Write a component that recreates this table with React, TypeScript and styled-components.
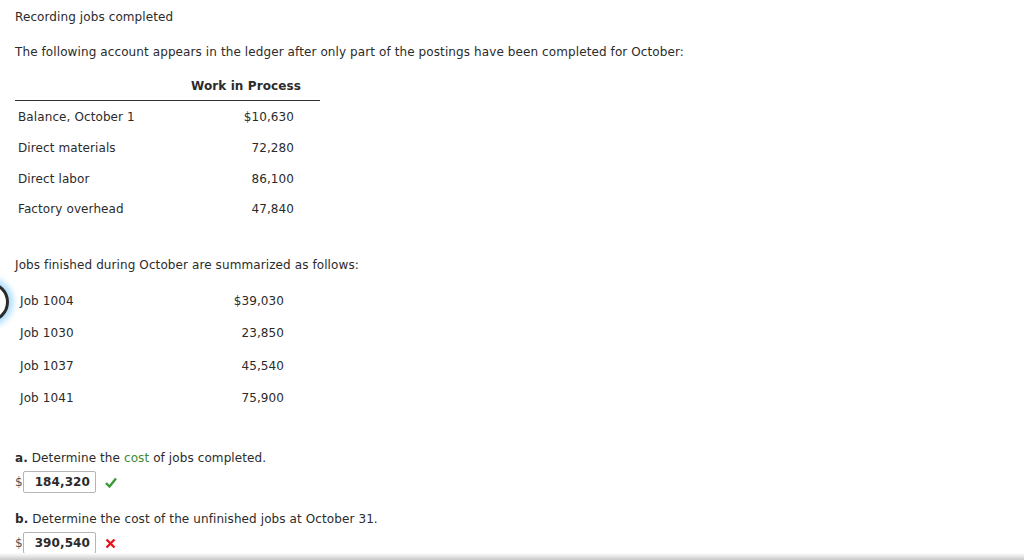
import styled, { createGlobalStyle } from 'styled-components';

const GlobalStyle = createGlobalStyle`
  html, body {
    margin: 0;
    padding: 0;
    background: #ffffff;
  }
  body {
    font-family: 'DejaVu Sans', Verdana, sans-serif;
    font-size: 12px;
    letter-spacing: 0.1px;
    color: #2b2b2b;
  }
`;

const Page = styled.div`
  position: relative;
  width: 1024px;
  height: 560px;
  overflow: hidden;
  padding: 9px 15px 0 15px;
  box-sizing: border-box;
`;

const Title = styled.div`
  line-height: 16px;
`;

const Para = styled.p<{ $top: number }>`
  margin: ${(p) => p.$top}px 0 0 0;
  line-height: 16px;
`;

const Ledger = styled.div`
  width: 305px;
  margin-top: 18px;
`;

const LedgerHead = styled.div`
  display: flex;
  justify-content: flex-end;
  padding: 0 19px 6px 0;
  border-bottom: 1px solid #333333;
  font-weight: bold;
  line-height: 16px;
`;

const LedgerBody = styled.div`
  padding-top: 1px;
`;

const Row = styled.div<{ $h: number; $pad: number; $amtRight: number; $amtW: number }>`
  display: grid;
  grid-template-columns: 1fr ${(p) => p.$amtW}px;
  height: ${(p) => p.$h}px;
  align-items: center;
  padding-left: ${(p) => p.$pad}px;
  padding-right: ${(p) => p.$amtRight}px;
`;

const Amount = styled.span`
  text-align: right;
`;

const Jobs = styled.div`
  width: 305px;
  margin-top: 12px;
`;

const Question = styled.div<{ $top: number }>`
  margin-top: ${(p) => p.$top}px;
  line-height: 16px;
`;

const Letter = styled.b`
  font-weight: bold;
`;

const Term = styled.span`
  color: #3d8b37;
`;

const AnswerRow = styled.div`
  display: flex;
  align-items: center;
  margin-top: 5px;
  height: 22px;
`;

const Dollar = styled.span`
  width: 8px;
  color: #555555;
`;

const AnswerBox = styled.div`
  width: 73px;
  height: 22px;
  box-sizing: border-box;
  border: 1px solid #b5b5b5;
  border-radius: 2px;
  display: flex;
  align-items: center;
  justify-content: flex-end;
  padding-right: 5px;
  font-weight: bold;
  color: #2b2b2b;
`;

const Mark = styled.span`
  margin-left: 9px;
  display: flex;
  align-items: center;
`;

const Ring = styled.div`
  position: absolute;
  left: -31px;
  top: 282px;
  width: 34px;
  height: 34px;
  border-radius: 50%;
  border: 3px solid #2a2a2a;
  box-shadow: 0 0 6px 4px rgba(110, 195, 255, 0.6);
`;

const BottomBar = styled.div`
  position: absolute;
  left: 0;
  right: 0;
  bottom: 0;
  height: 7px;
  background: linear-gradient(#ffffff, #e4e4e4 50%, #c9c9c9);
`;

const ledger = [
  ['Balance, October 1', '$10,630'],
  ['Direct materials', '72,280'],
  ['Direct labor', '86,100'],
  ['Factory overhead', '47,840'],
];

const jobs = [
  ['Job 1004', '$39,030'],
  ['Job 1030', '23,850'],
  ['Job 1037', '45,540'],
  ['Job 1041', '75,900'],
];

const Check = () => (
  <svg width="12" height="11" viewBox="0 0 12 11">
    <path d="M1 6 L4.5 9.5 L11 1.5" fill="none" stroke="#3c9a34" strokeWidth="2.4" />
  </svg>
);

const Cross = () => (
  <svg width="11" height="11" viewBox="0 0 11 11">
    <path d="M1.5 1.5 L9.5 9.5 M9.5 1.5 L1.5 9.5" fill="none" stroke="#e8141b" strokeWidth="2.4" />
  </svg>
);

export default function App() {
  return (
    <>
      <GlobalStyle />
      <Page>
        <Title>Recording jobs completed</Title>
        <Para $top={19}>
          The following account appears in the ledger after only part of the postings have been completed for October:
        </Para>
        <Ledger>
          <LedgerHead>Work in Process</LedgerHead>
          <LedgerBody>
            {ledger.map(([label, amt]) => (
              <Row key={label} $h={30.7} $pad={3} $amtRight={26} $amtW={80}>
                <span>{label}</span>
                <Amount>{amt}</Amount>
              </Row>
            ))}
          </LedgerBody>
        </Ledger>
        <Para $top={32}>Jobs finished during October are summarized as follows:</Para>
        <Jobs>
          {jobs.map(([label, amt]) => (
            <Row key={label} $h={32.4} $pad={5} $amtRight={36} $amtW={80}>
              <span>{label}</span>
              <Amount>{amt}</Amount>
            </Row>
          ))}
        </Jobs>
        <Question $top={36}>
          <Letter>a.</Letter> Determine the <Term>cost</Term> of jobs completed.
        </Question>
        <AnswerRow>
          <Dollar>$</Dollar>
          <AnswerBox>184,320</AnswerBox>
          <Mark>
            <Check />
          </Mark>
        </AnswerRow>
        <Question $top={18}>
          <Letter>b.</Letter> Determine the cost of the unfinished jobs at October 31.
        </Question>
        <AnswerRow>
          <Dollar>$</Dollar>
          <AnswerBox>390,540</AnswerBox>
          <Mark>
            <Cross />
          </Mark>
        </AnswerRow>
        <Ring />
        <BottomBar />
      </Page>
    </>
  );
}
